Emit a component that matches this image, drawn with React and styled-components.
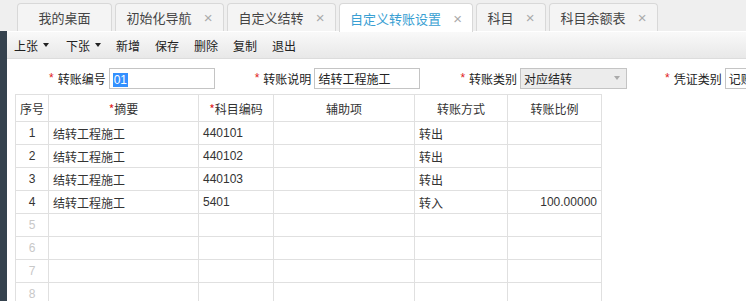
import React from 'react';
import styled, { createGlobalStyle } from 'styled-components';

const Global = createGlobalStyle`
  html, body {
    margin: 0;
    padding: 0;
    background: #fff;
    overflow: hidden;
  }
  body {
    font-family: "Noto Sans CJK SC", "Liberation Sans", sans-serif;
    font-size: 12px;
    color: #333;
  }
`;

const Page = styled.div`
  width: 746px;
  height: 301px;
  display: flex;
  flex-direction: column;
  overflow: hidden;
`;

const TabBar = styled.div`
  height: 31px;
  flex-shrink: 0;
  background: #efefef;
  display: flex;
  align-items: flex-end;
  gap: 3px;
  padding-left: 17px;
  box-sizing: border-box;
`;

const Tab = styled.div`
  box-sizing: border-box;
  width: ${p => p.w}px;
  height: ${p => (p.active ? '29px' : '28px')};
  margin-bottom: ${p => (p.active ? '-1px' : '0')};
  border: 1px solid #d8d8d8;
  border-bottom: none;
  border-radius: 4px 4px 0 0;
  background: ${p => (p.active ? '#fff' : '#f4f4f4')};
  color: ${p => (p.active ? '#3a9fd3' : '#444')};
  font-size: 13px;
  display: flex;
  align-items: center;
  justify-content: center;
  gap: 12px;
  position: relative;
`;

const Close = styled.span`
  color: #aaa;
  font-size: 15px;
  font-family: "Liberation Sans", sans-serif;
  line-height: 1;
`;

const Body = styled.div`
  flex: 1;
  display: flex;
  min-height: 0;
`;

const Strip = styled.div`
  width: 7px;
  flex-shrink: 0;
  background: #35424e;
`;

const Main = styled.div`
  flex: 1;
  display: flex;
  flex-direction: column;
  min-width: 0;
`;

const Toolbar = styled.div`
  height: 28px;
  flex-shrink: 0;
  box-sizing: border-box;
  border-top: 1px solid #fff;
  border-bottom: 1px solid #dcdcdc;
  background: linear-gradient(#f9f9f9, #e8e8e8);
  display: flex;
  align-items: center;
  padding-left: 7px;
`;

const ToolButton = styled.div`
  font-size: 12px;
  color: #222;
  margin-right: ${p => p.gap}px;
  display: flex;
  align-items: center;
  gap: 5px;
`;

const Caret = styled.span`
  width: 0;
  height: 0;
  border-left: 3.5px solid transparent;
  border-right: 3.5px solid transparent;
  border-top: 4px solid #222;
`;

const FormRow = styled.div`
  height: 35px;
  flex-shrink: 0;
  display: flex;
  align-items: center;
  padding-top: 3px;
  box-sizing: border-box;
  white-space: nowrap;
`;

const Field = styled.div`
  display: flex;
  align-items: center;
  margin-left: ${p => p.ml}px;
  flex-shrink: 0;
`;

const Star = styled.span`
  color: #e02020;
  font-size: 12px;
  margin-right: 4px;
  font-family: "Liberation Sans", sans-serif;
`;

const Label = styled.span`
  font-size: 12px;
  color: #222;
  margin-right: 3px;
`;

const Input = styled.div`
  width: ${p => p.w}px;
  height: 21px;
  box-sizing: border-box;
  border: 1px solid #c4c4c4;
  background: ${p => (p.gray ? '#ececec' : '#fff')};
  display: flex;
  align-items: center;
  justify-content: space-between;
  padding: 0 3px;
  font-size: 12px;
  color: #222;
`;

const Selected = styled.span`
  background: #3390ff;
  color: #fff;
  font-family: "Liberation Sans", sans-serif;
  padding: 0 1px;
`;

const SelectArrow = styled.span`
  width: 0;
  height: 0;
  border-left: 3.5px solid transparent;
  border-right: 3.5px solid transparent;
  border-top: 4px solid #aaa;
  margin-right: 3px;
`;

const TableWrap = styled.div`
  padding-left: 8px;
`;

const Table = styled.table`
  border-collapse: collapse;
  table-layout: fixed;
  font-size: 12px;
  color: #333;
`;

const Th = styled.th`
  height: 27px;
  border: 1px solid #e0e0e0;
  font-weight: normal;
  text-align: center;
  padding: 0;
  box-sizing: border-box;
`;

const Req = styled.span`
  color: #e02020;
`;

const Td = styled.td`
  height: 23px;
  border: 1px solid #e0e0e0;
  padding: 0 4px;
  box-sizing: border-box;
  text-align: ${p => p.align || 'left'};
  font-family: ${p => (p.num ? '"Liberation Sans", sans-serif' : 'inherit')};
  color: ${p => (p.muted ? '#c8c8c8' : '#333')};
`;

const tabs = [
  { label: '我的桌面', w: 95 },
  { label: '初始化导航', w: 109, close: true },
  { label: '自定义结转', w: 109, close: true },
  { label: '自定义转账设置', w: 134, close: true, active: true },
  { label: '科目', w: 70, close: true },
  { label: '科目余额表', w: 109, close: true },
];

const tools = [
  { label: '上张', caret: true, gap: 17 },
  { label: '下张', caret: true, gap: 15 },
  { label: '新增', gap: 15 },
  { label: '保存', gap: 15 },
  { label: '删除', gap: 15 },
  { label: '复制', gap: 15 },
  { label: '退出', gap: 0 },
];

const cols = [33, 150, 75, 141, 93, 94];

const rows = [
  ['1', '结转工程施工', '440101', '', '转出', ''],
  ['2', '结转工程施工', '440102', '', '转出', ''],
  ['3', '结转工程施工', '440103', '', '转出', ''],
  ['4', '结转工程施工', '5401', '', '转入', '100.00000'],
  ['5', '', '', '', '', ''],
  ['6', '', '', '', '', ''],
  ['7', '', '', '', '', ''],
  ['8', '', '', '', '', ''],
];

export default function App() {
  return (
    <Page>
      <Global />
      <TabBar>
        {tabs.map(t => (
          <Tab key={t.label} w={t.w} active={t.active}>
            <span>{t.label}</span>
            {t.close && <Close>×</Close>}
          </Tab>
        ))}
      </TabBar>
      <Body>
        <Strip />
        <Main>
          <Toolbar>
            {tools.map(t => (
              <ToolButton key={t.label} gap={t.gap}>
                {t.label}
                {t.caret && <Caret />}
              </ToolButton>
            ))}
          </Toolbar>
          <FormRow>
            <Field ml={42}>
              <Star>*</Star>
              <Label>转账编号</Label>
              <Input w={106}>
                <span><Selected>01</Selected></span>
              </Input>
            </Field>
            <Field ml={40}>
              <Star>*</Star>
              <Label>转账说明</Label>
              <Input w={106}>结转工程施工</Input>
            </Field>
            <Field ml={40}>
              <Star>*</Star>
              <Label>转账类别</Label>
              <Input w={107} gray>
                对应结转
                <SelectArrow />
              </Input>
            </Field>
            <Field ml={38}>
              <Star>*</Star>
              <Label>凭证类别</Label>
              <Input w={60}>记账</Input>
            </Field>
          </FormRow>
          <TableWrap>
            <Table>
              <colgroup>
                {cols.map((w, i) => (
                  <col key={i} style={{ width: w }} />
                ))}
              </colgroup>
              <thead>
                <tr>
                  <Th>序号</Th>
                  <Th><Req>*</Req>摘要</Th>
                  <Th><Req>*</Req>科目编码</Th>
                  <Th>辅助项</Th>
                  <Th>转账方式</Th>
                  <Th>转账比例</Th>
                </tr>
              </thead>
              <tbody>
                {rows.map(r => (
                  <tr key={r[0]}>
                    <Td align="center" num muted={!r[1]}>{r[0]}</Td>
                    <Td>{r[1]}</Td>
                    <Td num>{r[2]}</Td>
                    <Td>{r[3]}</Td>
                    <Td>{r[4]}</Td>
                    <Td align="right" num>{r[5]}</Td>
                  </tr>
                ))}
              </tbody>
            </Table>
          </TableWrap>
        </Main>
      </Body>
    </Page>
  );
}
